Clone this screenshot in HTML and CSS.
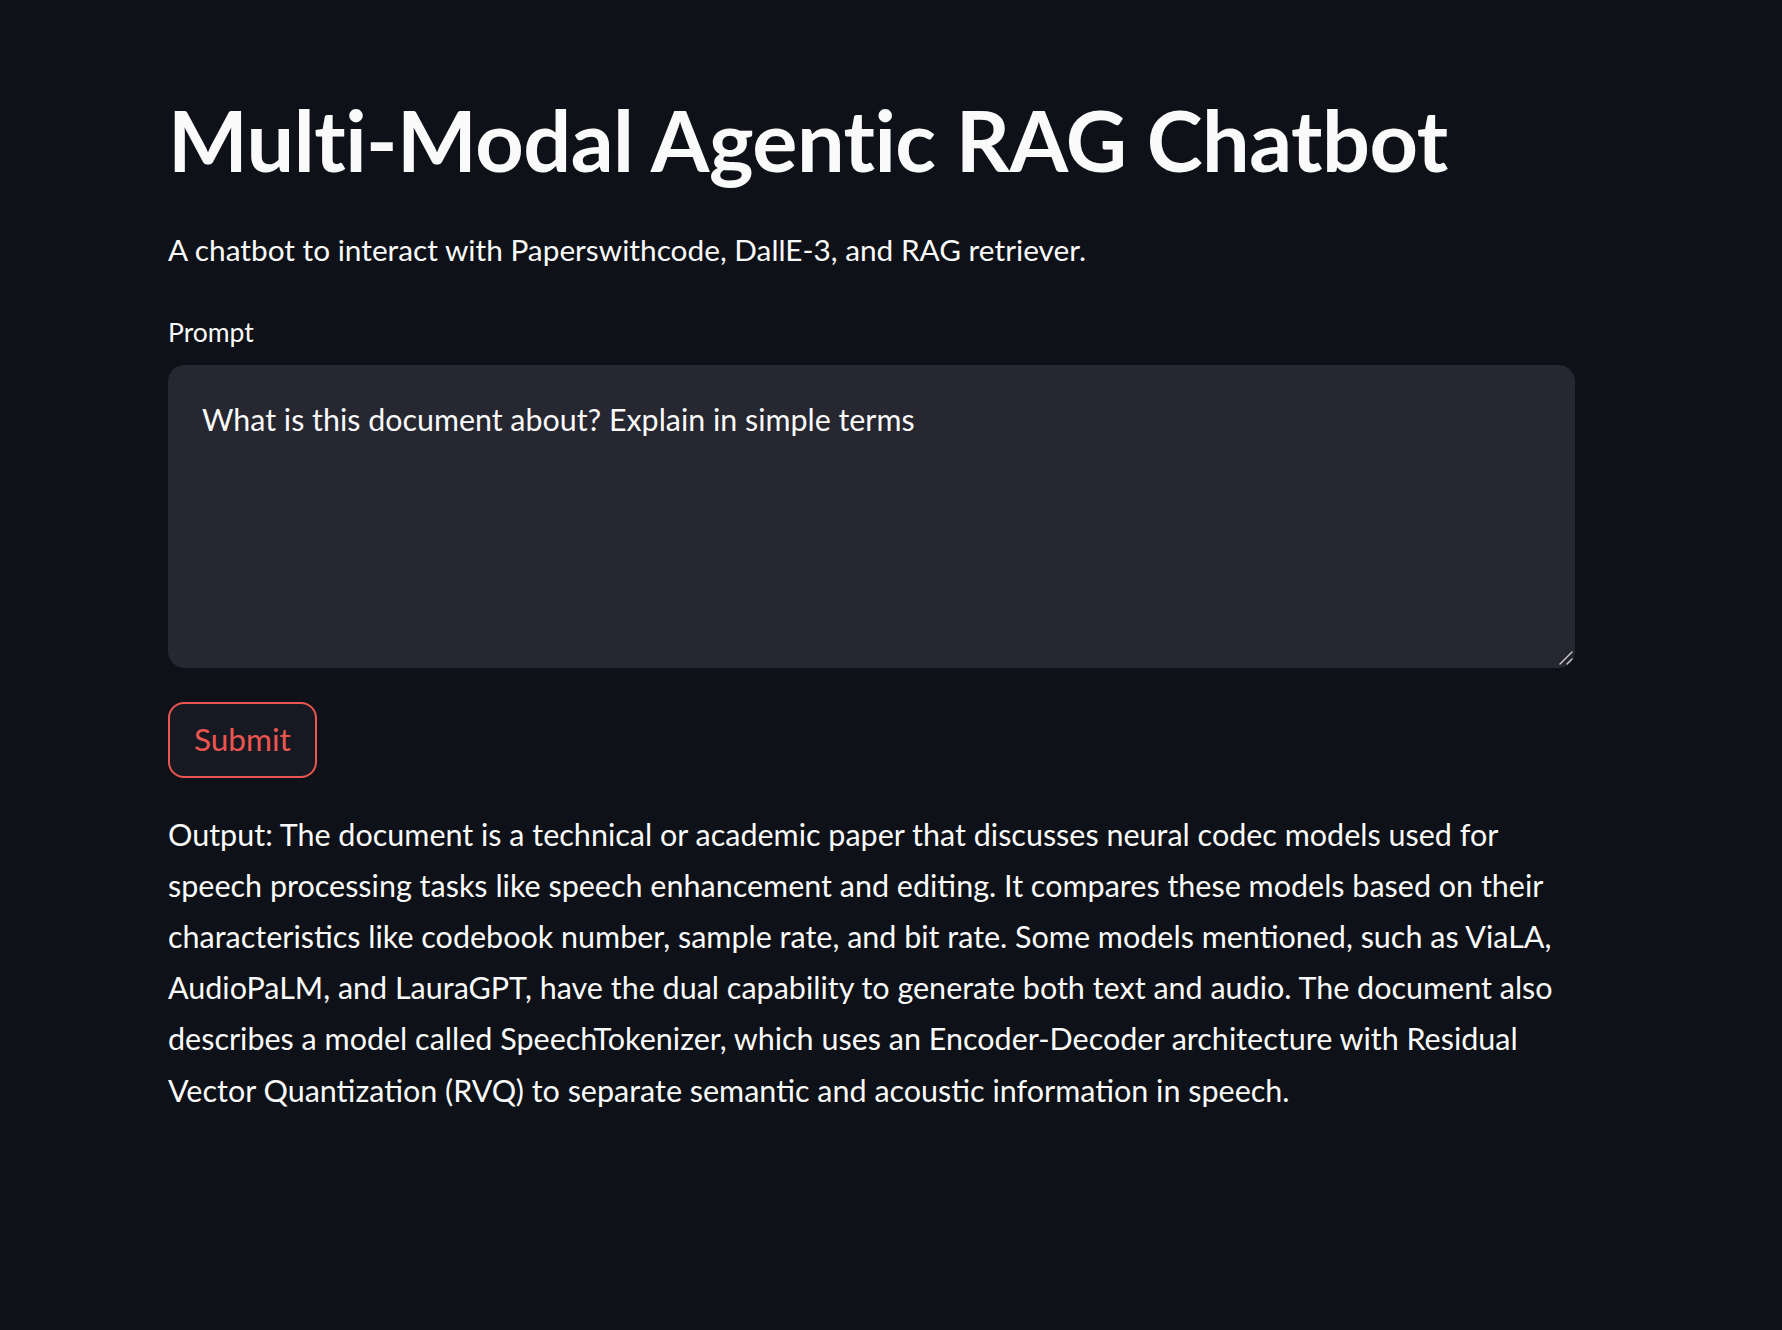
FILE: index.html
```html
<!DOCTYPE html>
<html lang="en">
<head>
<meta charset="utf-8">
<title>Multi-Modal Agentic RAG Chatbot</title>
<link rel="stylesheet" href="styles.css">
</head>
<body>
<main class="app">
  <h1 class="title">Multi-Modal Agentic RAG Chatbot</h1>
  <p class="subtitle">A chatbot to interact with Paperswithcode, DallE-3, and RAG retriever.</p>
  <label class="field-label" for="prompt">Prompt</label>
  <div class="prompt-wrap">
    <textarea id="prompt" class="prompt">What is this document about? Explain in simple terms</textarea>
    <svg class="grip" width="14" height="14" viewBox="0 0 14 14" aria-hidden="true">
      <line x1="1" y1="13" x2="13" y2="1" stroke="#1a1b22" stroke-width="3.2" stroke-linecap="round"/>
      <line x1="8" y1="13" x2="13" y2="8" stroke="#1a1b22" stroke-width="3.2" stroke-linecap="round"/>
      <line x1="1" y1="13" x2="13" y2="1" stroke="#c4c4c8" stroke-width="1.6" stroke-linecap="round"/>
      <line x1="8" y1="13" x2="13" y2="8" stroke="#c4c4c8" stroke-width="1.6" stroke-linecap="round"/>
    </svg>
  </div>
  <div class="actions">
    <button class="submit" type="button">Submit</button>
  </div>
  <p class="output">Output: The document is a technical or academic paper that discusses neural codec models used for speech processing tasks like speech enhancement and editing. It compares these models based on their characteristics like codebook number, sample rate, and bit rate. Some models mentioned, such as ViaLA, AudioPaLM, and LauraGPT, have the dual capability to generate both text and audio. The document also describes a model called SpeechTokenizer, which uses an Encoder-Decoder architecture with Residual Vector Quantization (RVQ) to separate semantic and acoustic information in speech.</p>
</main>
</body>
</html>
```

FILE: styles.css
```css
html, body {
  margin: 0;
  padding: 0;
  background: #0e1117;
}

body {
  color: #fafafa;
  font-family: "Lato", "Noto Sans", sans-serif;
  min-height: 1330px;
}

.app {
  width: 1407px;
  margin-left: 168px;
  padding-top: 89px;
  display: flex;
  flex-direction: column;
}

.title {
  margin: 0;
  font-size: 84.5px;
  font-weight: 700;
  line-height: 1.2;
  letter-spacing: -0.5px;
}

.subtitle {
  margin: 34px 0 0;
  font-size: 29.8px;
  line-height: 51.2px;
}

.field-label {
  margin-top: 38px;
  font-size: 26.5px;
  line-height: 36px;
}

.prompt-wrap {
  margin-top: 15px;
  position: relative;
  display: flex;
}

.prompt {
  box-sizing: border-box;
  width: 100%;
  height: 303px;
  padding: 28px 33px;
  background: #262730;
  color: #fafafa;
  border: 1px solid #262730;
  border-radius: 16px;
  font-family: inherit;
  font-size: 30.4px;
  line-height: 51.2px;
  resize: none;
  outline: none;
}

.grip {
  position: absolute;
  right: 2px;
  bottom: 3px;
  pointer-events: none;
}

.actions {
  margin-top: 34px;
  display: flex;
}

.submit {
  box-sizing: border-box;
  height: 76px;
  padding: 0 24px;
  display: inline-flex;
  align-items: center;
  background: #171922;
  color: #ec5550;
  border: 2px solid #ec5550;
  border-radius: 16px;
  font-family: inherit;
  font-size: 31.5px;
  line-height: 1;
}

.output {
  margin: 31px 0 0;
  font-size: 30.5px;
  line-height: 51.2px;
}
```
